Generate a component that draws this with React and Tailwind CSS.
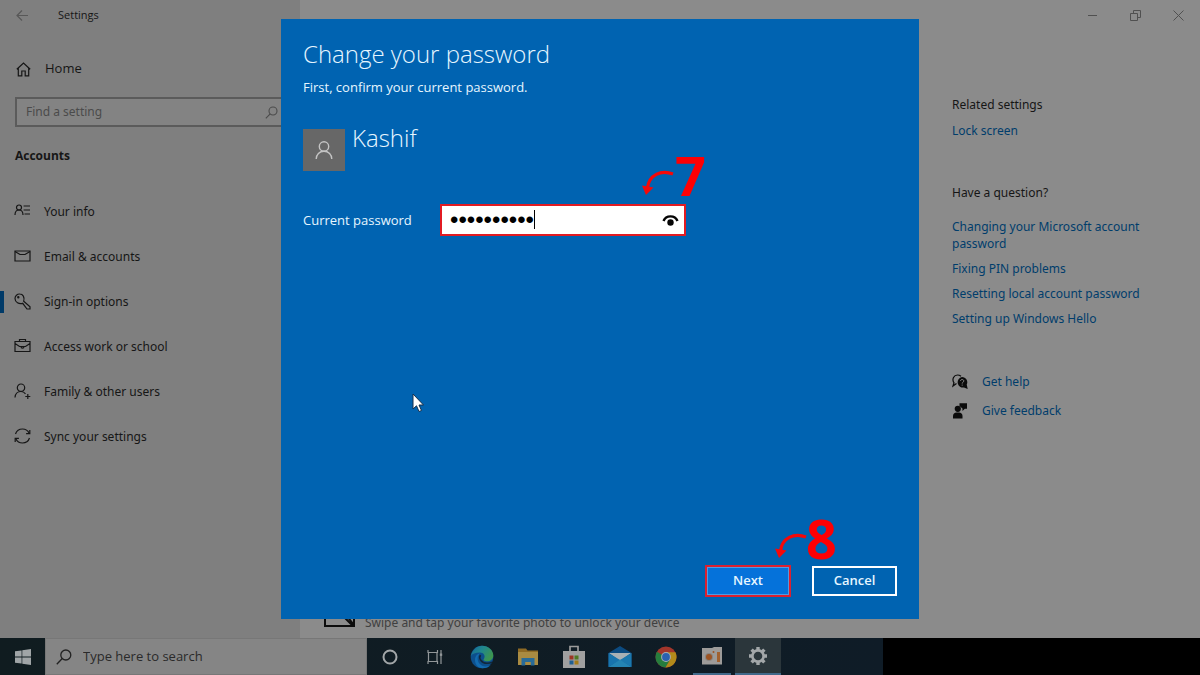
import React from "react";

const icons = {
  info: (
    <>
      <circle cx="5" cy="4.500" r="2.500" />
      <path d="M1 12C1 9 2.700 7 5 7s4 2 4 5M9.600 3H16M9.600 7H16M10.500 11H16" />
    </>
  ),
  mail: (
    <>
      <path d="M1 3h15v10H1z" />
      <path d="M1 3.500l5 3h5l5-3" />
    </>
  ),
  key: (
    <>
      <path d="M9.700 8.200l6.300 5.500v2.300h-3l-4.300-5.700C5 11.300 1 9.300 1 5.500A4.500 4.500 0 0 1 5.800 1C9 1 10.800 4.300 9.700 8.200Z" />
      <circle cx="4.300" cy="4.300" r=".6" />
    </>
  ),
  work: (
    <>
      <path d="M1 3.500h15v10H1zM5.500 3.500V1.500h6v2M1 5.500l4.500 3h6l4.500-3" />
      <path d="M7 8.500c0 2.200 3 2.200 3 0" />
    </>
  ),
  family: (
    <>
      <circle cx="7" cy="4.700" r="3.700" />
      <path d="M1 14.500c.3-3.700 2.800-6 6-6 2 0 3.400.8 4.500 2.300M13.800 11v5M11.300 13.500h5" />
    </>
  ),
  sync: (
    <>
      <path d="M1.500 6C2.500 3 5.200 1 8.500 1c3 0 5.500 1.700 6.700 4.300M15.500 10c-1 3-3.700 5-7 5-3 0-5.500-1.700-6.700-4.300" />
      <path d="M15.800 2v3.700h-3.700M1.200 14v-3.700h3.700" />
    </>
  ),
};

const navItems = [
  ["info", "Your info"],
  ["mail", "Email & accounts"],
  ["key", "Sign-in options"],
  ["work", "Access work or school"],
  ["family", "Family & other users"],
  ["sync", "Sync your settings"],
];

function Sidebar() {
  return (
    <aside className="flex w-1/4 shrink-0 flex-col bg-[#7f7f7f]">
      <div className="flex h-[30px] items-center">
        <button aria-label="Back" className="ml-4 mr-[29px] text-[#585858]">
          <svg className="h-[13px] w-[13px]" viewBox="0 0 13 13" fill="none" stroke="currentColor" strokeWidth="1.200">
            <path d="M12 6.500H1M6 1.500l-5 5 5 5" />
          </svg>
        </button>
        <h1 className="text-[11px] leading-4">Settings</h1>
      </div>
      <a href="#home" className="mt-[27px] flex h-6 items-center gap-[14px] pl-4 text-[13px]">
        <svg className="h-[15px] w-[15px]" viewBox="0 0 15 15" fill="none" stroke="currentColor" strokeWidth="1.200">
          <path d="M.8 7.300L7.500 1l6.700 6.300M2.300 6v7.800h3.500V9h3.400v4.800h3.500V6" />
        </svg>
        Home
      </a>
      <form className="mx-[15px] mt-4 flex h-[30px] items-center border-2 border-[#5b5b5b] bg-[#838383] px-[9px]">
        <input
          type="text"
          aria-label="Find a setting"
          placeholder="Find a setting"
          className="min-w-0 flex-1 bg-transparent font-['Noto_Sans'] text-[12px] text-[#222] outline-none placeholder:text-[#4b4b4b]"
        />
        <svg className="mr-[-4px] h-[13px] w-[13px] text-[#4b4b4b]" viewBox="0 0 13 13" fill="none" stroke="currentColor" strokeWidth="1.100">
          <circle cx="8" cy="5" r="4" />
          <path d="M5.200 7.800L.8 12.300" />
        </svg>
      </form>
      <h2 className="mt-[19px] pl-[15px] text-[12px] leading-5 font-bold">Accounts</h2>
      <nav className="mt-[23px] font-['Noto_Sans'] text-[12px]">
        <ul>
          {navItems.map(([id, label]) => (
            <li key={id}>
              <a href={`#${id}`} className="flex h-[45px] items-center">
                <span className={id === "key" ? "h-[22px] w-1 bg-[#003a68]" : "h-[22px] w-1"} />
                <svg className="ml-[10px] mr-[13px] h-[17px] w-[17px]" viewBox="0 0 17 17" fill="none" stroke="currentColor" strokeWidth="1.200">
                  {icons[id]}
                </svg>
                <span>{label}</span>
              </a>
            </li>
          ))}
        </ul>
      </nav>
    </aside>
  );
}

function WindowButtons() {
  return (
    <div className="flex h-[30px] justify-end text-[#505050]">
      <button aria-label="Minimize" className="grid w-[43px] place-items-center">
        <svg className="h-[11px] w-[11px]" viewBox="0 0 11 11" stroke="currentColor"><path d="M1 5.500h9" /></svg>
      </button>
      <button aria-label="Restore" className="grid w-[43px] place-items-center">
        <svg className="h-[11px] w-[11px]" viewBox="0 0 11 11" fill="none" stroke="currentColor">
          <path d="M.5 3.500h7v7h-7zM3.500 3.500v-3h7v7h-3" />
        </svg>
      </button>
      <button aria-label="Close" className="grid w-[43px] place-items-center">
        <svg className="h-[11px] w-[11px]" viewBox="0 0 11 11" stroke="currentColor"><path d="M.5.5l10 10M10.500.5l-10 10" /></svg>
      </button>
    </div>
  );
}

function Related() {
  return (
    <aside className="mt-[66px] flex w-[248px] flex-col font-['Noto_Sans'] text-[12px] leading-[17px] text-[#003d6b]">
      <h2 className="text-[#161616]">Related settings</h2>
      <a href="#lock" className="mt-[9px]">Lock screen</a>
      <h2 className="mt-[45px] text-[#161616]">Have a question?</h2>
      <ul className="mt-[17px] flex w-[210px] flex-col gap-2">
        <li><a href="#microsoft">Changing your Microsoft account password</a></li>
        <li><a href="#pin">Fixing PIN problems</a></li>
        <li><a href="#reset">Resetting local account password</a></li>
        <li><a href="#hello">Setting up Windows Hello</a></li>
      </ul>
      <a href="#help" className="mt-[46px] flex items-center gap-[14px]">
        <svg className="h-4 w-4" viewBox="0 0 16 16">
          <path d="M4.500 9.500L1 12l1-3.200C-.5 5 2 1 5.500 1c1.500 0 2.500.5 3.500 1.300" fill="none" stroke="#0b0b0b" strokeWidth="1.200" />
          <path d="M10 3a5.200 5.200 0 0 1 4.700 7.600l1 4.400-3.700-1.500A5.300 5.300 0 1 1 10 3Z" fill="#0b0b0b" />
          <path d="M8.500 7c0-2 3.300-2 3.300 0 0 1.200-1.600 1.200-1.600 2.500M10.200 10.600v1" fill="none" stroke="#898989" />
        </svg>
        Get help
      </a>
      <a href="#feedback" className="mt-3 flex items-center gap-[14px]">
        <svg className="h-4 w-4 text-[#0b0b0b]" viewBox="0 0 16 16" fill="currentColor">
          <circle cx="5.800" cy="5.800" r="3.100" />
          <path d="M1 15.500V13c0-2.200 1.500-3.500 3.500-3.500H7c2 0 3.500 1.300 3.500 3.500v2.500zM7.500.3H15v5.400h-2.200L10.500 8V5.500L7.500 3z" />
        </svg>
        Give feedback
      </a>
    </aside>
  );
}

function Arrow({ className }) {
  return (
    <svg className={className} viewBox="0 0 32 26" fill="none">
      <path d="M31 4C19-.5 7 5 5.500 18" stroke="#f60808" strokeWidth="3.200" />
      <path d="M0 15.500l11.500 2-7.500 7.500z" fill="#f60808" />
    </svg>
  );
}

function PasswordDialog() {
  return (
    <section
      role="dialog"
      aria-labelledby="dialog-title"
      className="relative flex h-[600px] w-[638px] flex-col bg-[#0063b1] px-[22px] pb-[22px] text-[#e6f6ff]"
    >
      <h2 id="dialog-title" className="mt-[19px] text-[24px] leading-8 font-light">Change your password</h2>
      <p className="mt-[7px] text-[13px] leading-5">First, confirm your current password.</p>
      <div className="mt-8 flex gap-[7px]">
        <div className="grid h-[42px] w-[42px] place-items-center bg-[#676767]">
          <svg className="h-[18px] w-[18px]" viewBox="0 0 18 18" fill="none" stroke="#c4c4c4" strokeWidth="1.400">
            <circle cx="9" cy="5.500" r="4.700" />
            <path d="M1.200 18c0-4.500 3.300-7.800 7.800-7.800s7.800 3.300 7.800 7.800" />
          </svg>
        </div>
        <p className="mt-[-7px] text-[24px] leading-8 font-light">Kashif</p>
      </div>
      <form className="mt-[33px] flex items-center">
        <label htmlFor="password" className="w-[137px] text-[13px] leading-5">Current password</label>
        <div className="relative flex h-8 w-[246px] items-center border-2 border-[#e21b23] bg-white pl-2 pr-[5px]">
          <input
            id="password"
            type="password"
            defaultValue="abcdefghij"
            className="h-7 min-w-0 flex-1 bg-transparent font-['Liberation_Sans'] text-[24px] text-black caret-transparent outline-none"
          />
          <span className="absolute top-[4px] left-[92px] h-[19px] w-px bg-black" />
          <button type="button" aria-label="Show password">
            <svg className="h-[17px] w-[17px]" viewBox="0 0 17 17" fill="none">
              <path d="M1.500 9C4 2.800 13 2.800 15.500 9" stroke="#050505" strokeWidth="2.400" />
              <circle cx="8.500" cy="10.500" r="3.200" fill="#050505" />
            </svg>
          </button>
        </div>
      </form>
      <div className="mt-auto flex items-center justify-end gap-[21px] text-[13px] font-semibold">
        <button className="h-8 w-[86px] border-2 border-[#dc2030] bg-[#0572da] outline outline-1 -outline-offset-[3px] outline-[#4f9be2]">Next</button>
        <button className="h-[30px] w-[85px] border-2 border-white">Cancel</button>
      </div>

      <Arrow className="absolute top-[151px] left-[361px] h-[26px] w-8" />
      <span className="absolute top-[129px] left-[394px] text-[54px] leading-[54px] font-bold text-[#fd0004]">7</span>
      <Arrow className="absolute top-[514px] left-[494px] h-[26px] w-8" />
      <span className="absolute top-[492px] left-[525px] text-[54px] leading-[54px] font-bold text-[#fd0004]">8</span>
      <svg className="absolute top-[374px] left-[131px] h-5 w-3" viewBox="0 0 12 20">
        <path d="M1 1v15l3.500-3.200L7 18.500l2.500-1L7 12h4.500z" fill="#fff" stroke="#16314d" />
      </svg>
    </section>
  );
}

const apps = [
  ["Microsoft Edge", (
    <>
      <defs>
        <linearGradient id="edge" x1="0" y1="0" x2="1" y2=".5">
          <stop offset="0" stopColor="#15679b" />
          <stop offset=".5" stopColor="#20878d" />
          <stop offset="1" stopColor="#3d954f" />
        </linearGradient>
      </defs>
      <circle cx="12" cy="12" r="11.300" fill="#0d4f8c" />
      <path d="M.8 11C2.500 4.500 7 .7 12 .7c6.500 0 11.300 4.500 11.300 9.600 0 4-3 6-6.300 6-2.700 0-4.200-1-3.200-2.200 2-2.800.2-6.500-4-6.500C5.500 7.600 2 9 .8 11Z" fill="url(#edge)" />
      <path d="M10.200 8.500c-3 2-3.400 6.500-.8 10 2.700 3.300 7.500 3.900 11.500 1.200-2 2.400-5.200 3.700-8.600 3.600C5.500 23 4 15.500 5.500 12c1-2.300 2.700-3.300 4.700-3.500Z" fill="#126bb0" />
      <path d="M10.500 10c-2 3 .5 8.300 6.500 8.300 2 0 3.800-.5 5-1.200" fill="none" stroke="#12283b" strokeWidth="1.600" />
    </>
  )],
  ["File Explorer", (
    <>
      <path d="M2 3.500h8l1.500 2H22V20H2z" fill="#8f6b25" />
      <path d="M2 7h20v13H2z" fill="#a98b42" />
      <path d="M5.500 20.500V13h13v7.500h-3.700V17H9.200v3.500z" fill="#286b98" />
    </>
  )],
  ["Microsoft Store", (
    <>
      <path d="M8 6V1.500h8V6" fill="none" stroke="#9b9b9b" strokeWidth="1.700" />
      <path d="M1 6h22v17H1z" fill="#a0a0a0" />
      <path d="M7.500 10.500h4v4h-4z" fill="#9b3423" />
      <path d="M12.500 10.500h4v4h-4z" fill="#4f7823" />
      <path d="M7.500 15.500h4v4h-4z" fill="#205f91" />
      <path d="M12.500 15.500h4v4h-4z" fill="#a37b17" />
    </>
  )],
  ["Mail", (
    <>
      <path d="M.5 8L12 1l11.500 7v14H.5z" fill="#0c4b80" />
      <path d="M1 8h22L12 16z" fill="#a9b1b5" />
      <path d="M.5 8L12 15 .5 22z" fill="#1874ad" />
      <path d="M23.500 8L12 15l11.500 7z" fill="#1b78ae" />
      <path d="M.5 22L12 14.500 23.500 22z" fill="#2484b3" />
    </>
  )],
  ["Google Chrome", (
    <>
      <circle cx="12" cy="12" r="10.500" fill="#a3362b" />
      <path d="M12 12L2.900 6.800A10.500 10.500 0 0 0 11.500 22.500L16.500 14.500Z" fill="#267d3d" />
      <path d="M12 7.300h9.400A10.500 10.500 0 0 1 11.500 22.500L16.500 14Z" fill="#b28a1a" />
      <circle cx="12" cy="12" r="4.900" fill="#a8adb2" />
      <circle cx="12" cy="12" r="3.900" fill="#2b62b0" />
    </>
  )],
  ["Screen Recorder", (
    <>
      <path d="M2 4h10l2-1h8v17.500H2z" fill="#9d9b99" />
      <circle cx="9" cy="13" r="4" fill="#8a8581" />
      <circle cx="9" cy="13" r="3" fill="#9d5423" />
      <circle cx="13.500" cy="8" r="1" fill="#9d5423" />
      <path d="M17 8h3v10h-3z" fill="#a1612f" />
    </>
  )],
  ["Settings", (
    <>
      <circle cx="12" cy="12" r="5.600" fill="none" stroke="#a3a7a9" strokeWidth="2.600" />
      <path d="M12 3v3M12 18v3M3 12h3M18 12h3M5.600 5.600l2.200 2.200M16.200 16.200l2.200 2.200M5.600 18.400l2.200-2.200M16.200 7.800l2.200-2.200" stroke="#a3a7a9" strokeWidth="3.400" />
    </>
  )],
];

function Taskbar() {
  return (
    <footer className="flex h-[37px] bg-black">
      <div className="flex w-[883px] bg-linear-to-r from-[#101c20] to-[#0f1c27]">
        <button aria-label="Start" className="grid w-[45px] place-items-center">
          <svg className="h-4 w-4" viewBox="0 0 16 16" fill="#a0a5a7">
            <path d="M0 2.300l6.600-.9v6.200H0zM7.300 1.300L16 0v7.600H7.300zM0 8.400h6.600v6.200L0 13.700zM7.300 8.400H16V16l-8.700-1.300z" />
          </svg>
        </button>
        <label className="flex w-[322px] items-center border border-[#777] bg-[#858585] pl-[10px]">
          <svg className="mr-[11px] h-4 w-4" viewBox="0 0 16 16" fill="none" stroke="#222" strokeWidth="1.300">
            <circle cx="9.800" cy="6" r="5" />
            <path d="M6.200 9.500L.8 15.200" />
          </svg>
          <input
            type="text"
            aria-label="Type here to search"
            placeholder="Type here to search"
            className="min-w-0 flex-1 bg-transparent text-[13px] outline-none placeholder:text-[#2a2a2a]"
          />
        </label>
        <button aria-label="Cortana" className="grid w-[45px] place-items-center">
          <svg className="h-4 w-4" viewBox="0 0 16 16" fill="none" stroke="#a3a7a9" strokeWidth="2">
            <circle cx="8" cy="8" r="6.500" />
          </svg>
        </button>
        <button aria-label="Task view" className="mr-[2px] grid w-[45px] place-items-center">
          <svg className="h-4 w-4" viewBox="0 0 16 16" fill="none" stroke="#929799" strokeWidth="1.200">
            <path d="M1 1v2.500h9.500V1M1 15v-2.500h9.500V15M1.500 3.500v9M10 3.500v9M14 1v14" />
            <path d="M12.800 4.500h2.400v2.400h-2.400z" fill="#929799" stroke="none" />
          </svg>
        </button>
        {apps.map(([name, art], i) => (
          <button
            key={name}
            aria-label={name}
            className={
              i === 6
                ? "grid w-[46px] place-items-center border-b-2 border-[#41698a] bg-[#2b363b]"
                : "grid w-[46px] place-items-center"
            }
          >
            <span className={i === 5 ? "grid h-full w-[38px] place-items-center border-b-2 border-[#41698a]" : "grid place-items-center"}>
              <svg className="h-6 w-6" viewBox="0 0 24 24">{art}</svg>
            </span>
          </button>
        ))}
      </div>
    </footer>
  );
}

export default function App() {
  return (
    <div className="flex min-h-screen flex-col bg-[#8b8b8b] font-['Open_Sans',sans-serif] text-[#161616]">
      <main className="relative flex flex-1">
        <Sidebar />
        <div className="flex flex-1 flex-col">
          <WindowButtons />
          <div className="flex flex-1">
            <div className="flex flex-1 items-end gap-[10px] pb-[5px] pl-6">
              <svg className="mb-[6px] h-[22px] w-[31px]" viewBox="0 0 31 22" fill="none" stroke="#0c0c0c" strokeWidth="2">
                <path d="M1 1h29v20H1zM14 6l15 15M19 13l3-3 8 10" />
              </svg>
              <p className="font-['Noto_Sans'] text-[12px] leading-5 text-[#404040]">Swipe and tap your favorite photo to unlock your device</p>
            </div>
            <Related />
          </div>
        </div>
        <div className="absolute inset-0 flex items-center justify-center">
          <PasswordDialog />
        </div>
      </main>
      <Taskbar />
    </div>
  );
}
